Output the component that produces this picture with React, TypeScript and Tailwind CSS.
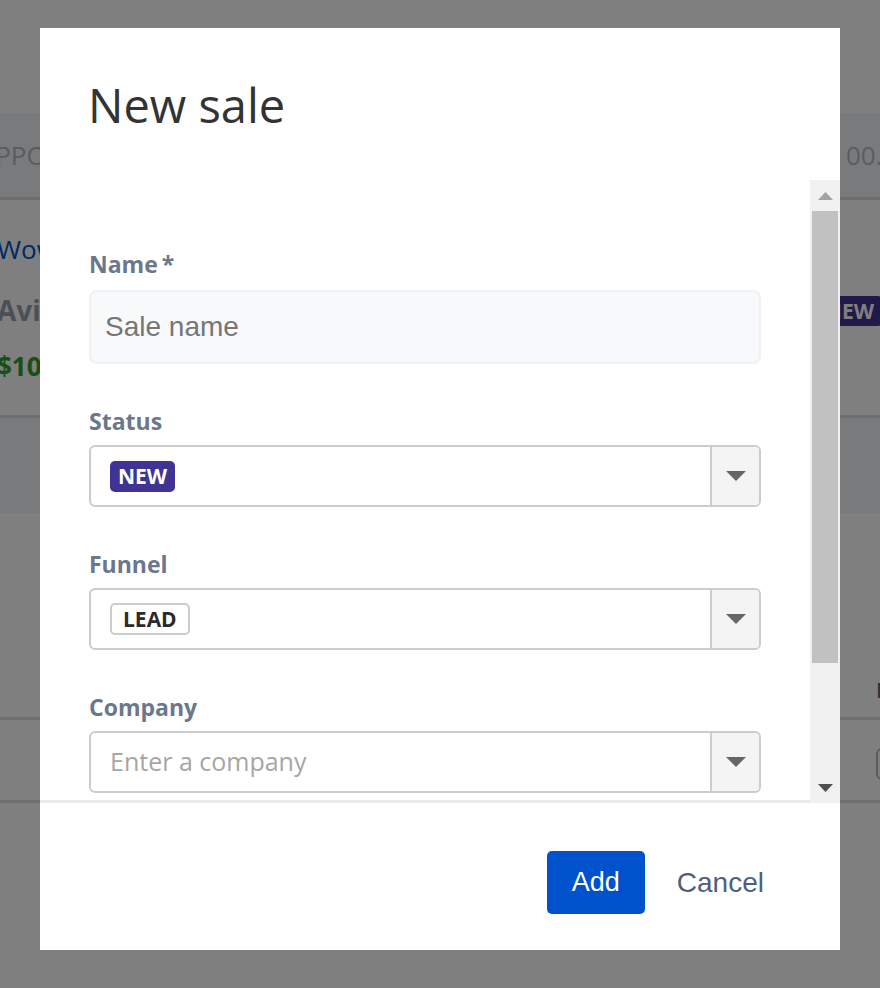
import { useState } from "react";

const sans = "font-['Open_Sans','Noto_Sans',sans-serif]";
const arial = "font-['Liberation_Sans',Arial,sans-serif]";

function Caret({ className }: { className: string }) {
	return (
		<svg width="20" height="10" viewBox="0 0 20 10" className={className}>
			<path d="M0 0 L20 0 L10 10 Z" fill="currentColor" />
		</svg>
	);
}

function FieldLabel({ children, required }: { children: React.ReactNode; required?: boolean }) {
	return (
		<div className={`${sans} text-[23px] leading-[30px] font-bold text-[#6b778c]`}>
			{children}
			{required && <span className="ml-[4px]">*</span>}
		</div>
	);
}

function SelectBox({ children }: { children: React.ReactNode }) {
	return (
		<div className="flex h-[62px] rounded-[6px] border-2 border-[#cccccc] bg-white overflow-hidden">
			<div className="flex-1 flex items-center pl-[19px]">{children}</div>
			<div className="w-[49px] border-l-2 border-[#cccccc] bg-[#f4f4f4] flex items-center justify-center">
				<Caret className="text-[#666666]" />
			</div>
		</div>
	);
}

function FakeScrollbar() {
	return (
		<div className="w-[30px] h-[623px] bg-[#f1f1f1] flex flex-col">
			<div className="h-[31px] flex items-center justify-center">
				<svg width="15" height="8" viewBox="0 0 15 8">
					<path d="M0 8 L15 8 L7.5 0 Z" fill="#a3a3a3" />
				</svg>
			</div>
			<div className="h-[452px] mx-[2px] bg-[#c1c1c1]" />
			<div className="flex-1" />
			<div className="h-[31px] flex items-center justify-center">
				<svg width="15" height="8" viewBox="0 0 15 8">
					<path d="M0 0 L15 0 L7.5 8 Z" fill="#505050" />
				</svg>
			</div>
		</div>
	);
}

function BackgroundPage() {
	return (
		<div className={`${sans} h-[988px] w-[880px] bg-white overflow-hidden`}>
			<div className="h-[113px]" />
			<div className="h-[87px] bg-[#f2f4f9] border-b-[3px] border-[#dcdde0] flex items-center text-[26px] text-[#b3bac5]">
				<span className="-ml-[25px] shrink-0">OPPORTUNITY</span>
				<div className="flex-1" />
				<span className="shrink-0 w-[120px] -mr-[86px]">00.00.2021</span>
			</div>
			<div className="h-[218px] border-b-[3px] border-[#dcdde0] flex">
				<div className="-ml-[3px] pt-[31px] flex flex-col shrink-0">
					<span className="text-[26px] leading-[36px] text-[#0052cc]">Wowdesk</span>
					<span className="mt-[24px] text-[28px] leading-[38px] font-bold text-[#97a0af]">Avis Budget</span>
					<span className="mt-[19px] text-[26px] leading-[36px] font-bold text-[#2f9e2f]">$10,000</span>
				</div>
				<div className="flex-1" />
				<div className="pt-[96px] -mr-[3px] shrink-0">
					<span className="inline-block rounded-[5px] bg-[#403494] px-[9px] text-[21px] leading-[30px] font-bold text-white">
						NEW
					</span>
				</div>
			</div>
			<div className="h-[95px] bg-[#f2f4f9]" />
			<div className="h-[207px] border-b-[3px] border-[#dcdde0] flex items-start justify-end">
				<span className="mt-[160px] w-[60px] -mr-[56px] shrink-0 text-[22px] font-bold text-[#5e6270]">Info</span>
			</div>
			<div className="h-[83px] border-b-[3px] border-[#dcdde0] flex items-start justify-end">
				<div className="mt-[28px] w-[60px] h-[32px] -mr-[56px] shrink-0 rounded-[6px] border-2 border-[#bbbbbb]" />
			</div>
		</div>
	);
}

export default function App() {
	const [name, setName] = useState("");

	return (
		<div className="relative w-[880px] h-[988px] overflow-hidden">
			<BackgroundPage />
			<div className="absolute inset-0 bg-black/50 flex justify-center pt-[28px]">
				<div className="w-[800px] h-[922px] bg-white flex flex-col">
					<div className="h-[152px] pt-[47px] pl-[48px] pr-[49px]">
						<h1 className={`${sans} text-[47px] leading-[60px] text-[#333333]`}>New sale</h1>
					</div>
					<div className="flex">
						<div className="w-[770px] h-[623px] border-b-[3px] border-[#e9eaee] overflow-hidden px-[49px] pt-[69px]">
							<FieldLabel required>Name</FieldLabel>
							<input
								value={name}
								onChange={(e) => setName(e.target.value)}
								placeholder="Sale name"
								className={`${arial} mt-[11px] block w-full h-[74px] rounded-[8px] border-2 border-[#eff1f4] bg-[#f8f9fb] px-[14px] text-[28px] text-[#333] placeholder:text-[#767676] outline-none`}
							/>

							<div className="mt-[42px]">
								<FieldLabel>Status</FieldLabel>
								<div className="mt-[9px]">
									<SelectBox>
										<span className={`${sans} rounded-[5px] bg-[#3f3494] px-[8px] text-[21px] leading-[31px] font-bold text-white`}>
											NEW
										</span>
									</SelectBox>
								</div>
							</div>

							<div className="mt-[42px]">
								<FieldLabel>Funnel</FieldLabel>
								<div className="mt-[9px]">
									<SelectBox>
										<span className={`${sans} rounded-[5px] border-2 border-[#cccccc] px-[11px] text-[21px] leading-[28px] font-bold text-[#2b2b2b]`}>
											LEAD
										</span>
									</SelectBox>
								</div>
							</div>

							<div className="mt-[42px]">
								<FieldLabel>Company</FieldLabel>
								<div className="mt-[9px]">
									<SelectBox>
										<span className={`${sans} text-[25px] text-[#a6a6a6]`}>Enter a company</span>
									</SelectBox>
								</div>
							</div>
						</div>
						<FakeScrollbar />
					</div>
					<div className="flex justify-end items-start pt-[48px] pr-[76px]">
						<button
							type="button"
							className={`${arial} w-[98px] h-[63px] rounded-[5px] bg-[#0052cc] text-[27px] text-white`}
						>
							Add
						</button>
						<button type="button" className={`${arial} ml-[32px] h-[63px] text-[28px] text-[#505f79]`}>
							Cancel
						</button>
					</div>
				</div>
			</div>
		</div>
	);
}
